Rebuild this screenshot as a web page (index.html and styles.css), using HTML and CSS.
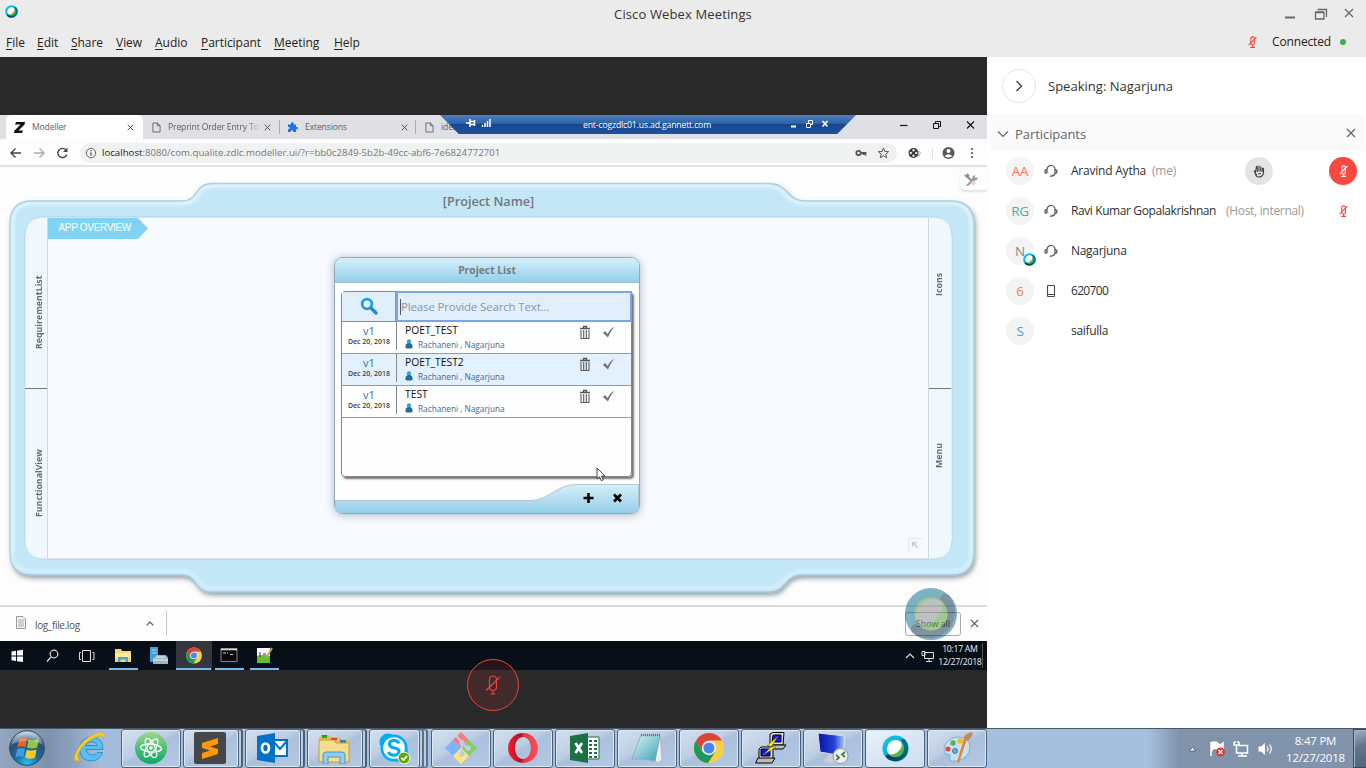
FILE: index.html
```html
<!DOCTYPE html>
<html lang="en">
<head>
<meta charset="utf-8">
<title>Cisco Webex Meetings</title>
<link rel="stylesheet" href="styles.css">
</head>
<body>
<svg class="sprite" aria-hidden="true">
  <defs>
    <linearGradient id="cyan" x1="0" y1="0" x2="1" y2="1"><stop offset="0" stop-color="#12c8ee"/><stop offset="1" stop-color="#0096c4"/></linearGradient>
    <linearGradient id="teal" x1="1" y1="0" x2="0" y2="1"><stop offset="0" stop-color="#017ba0"/><stop offset="1" stop-color="#053c55"/></linearGradient>
    <linearGradient id="green" x1="0" y1="0" x2="1" y2="1"><stop offset="0" stop-color="#a5dc60"/><stop offset="1" stop-color="#3fa548"/></linearGradient>
    <linearGradient id="glass" x1="0" y1="0" x2="0" y2="1"><stop offset="0" stop-color="#d6effa"/><stop offset="1" stop-color="#93cde9"/></linearGradient>
  </defs>
  <symbol id="webex" viewBox="0 0 32 32">
    <circle cx="16" cy="16" r="15.500" fill="url(#cyan)"/>
    <path d="M27.500 5.700A15.500 15.500 0 0 1 5.200 27.100Q3.500 24.500 6 23Q8 22.200 9.500 23.500A10 10 0 0 0 23.500 9.500Q21.800 7 24 5Q26 4 27.500 5.700Z" fill="url(#teal)"/>
    <circle cx="16" cy="16" r="10.300" fill="url(#green)"/>
    <path d="M8.700 23.200A10.300 10.300 0 0 1 22.800 8.300Q24.500 14 20 18.800Q15.500 23.500 8.700 23.200Z" fill="#fff"/>
  </symbol>
  <symbol id="mic-off" viewBox="0 0 16 20">
    <g fill="none" stroke="currentColor" stroke-width="1.200"><rect x="4.500" y="1" width="7" height="14.500" rx="3.500"/><path d="M8 15.500V19M5.500 19h5M1 15.500L15 2"/></g>
  </symbol>
  <symbol id="mic-small" viewBox="0 0 9 12">
    <g fill="none" stroke="currentColor" stroke-width="1.150"><rect x="2.800" y=".8" width="3.600" height="8.200" rx="1.800"/><path d="M4.600 9V11.300M2.200 11.400H7M.6 9.200L8.500 1.200"/></g>
  </symbol>
  <symbol id="headset" viewBox="0 0 14 14">
    <path d="M3 9V5.500A4 4 0 0 1 11 5.500V9Q11 11.500 7.500 12M3 5.500Q1 5.500 1 7.500T3 9.200M11 5.500Q13 5.500 13 7.500T11 9.200M6 12.200H8.300" fill="none" stroke="#4a4a4a" stroke-width="1.200"/>
  </symbol>
  <symbol id="cross" viewBox="0 0 10 10"><path d="M1 1L9 9M9 1L1 9" fill="none" stroke="currentColor" stroke-width="1.300"/></symbol>
  <symbol id="doc" viewBox="0 0 10 12"><path d="M1 1H6L9 4V11H1ZM6 1V4H9" fill="none" stroke="#606368" stroke-width="1"/></symbol>
  <symbol id="trash" viewBox="0 0 10 15"><path d="M0 3.500H10M3.500 3V1.500H6.500V3" fill="none" stroke="#555" stroke-width="1.300"/><path d="M1 5V13.500H9V5M3.700 5V13M6.300 5V13" fill="none" stroke="#5c5c5c" stroke-width="1.100"/></symbol>
  <symbol id="check" viewBox="0 0 12 12"><path d="M0 7L2 5L4.500 8Q7 3 11.500 .5Q7.500 5 5 11.500Z" fill="#737373"/></symbol>
  <symbol id="person" viewBox="0 0 8 10"><circle cx="4" cy="2.400" r="2.200" fill="#3aa6d0"/><path d="M.5 9Q0 4 4 4T7.500 9Q4 10 .5 9Z" fill="#1f6d9a"/></symbol>
  <symbol id="chrome" viewBox="0 0 32 32">
    <circle cx="16" cy="16" r="15" fill="#f9cf48"/>
    <path d="M3 8.500A15 15 0 0 1 29 8.500H16L9.500 20Z" fill="#db4437"/>
    <path d="M3 8.500A15 15 0 0 0 15 31L22.500 19.500L16 23L9.500 20Z" fill="#1b9a59"/>
    <circle cx="16" cy="16" r="7.200" fill="#f3f3f3"/><circle cx="16" cy="16" r="5.600" fill="#4688f1"/>
  </symbol>
</svg>

<header class="top">
  <div class="titlebar">
    <svg class="app-logo"><use href="#webex"/></svg>
    <h1 class="title">Cisco Webex Meetings</h1>
    <svg class="win-ctl" viewBox="0 0 72 14"><path d="M1 10.500H11" stroke="#666" stroke-width="2"/><path d="M32.500 5.500h7.500v6.500h-8.500v-6.500zM31.500 5h8.500M33.500 2.500H42.500V10" fill="none" stroke="#666" stroke-width="1.300"/><path d="M61 2L69 10M69 2L61 10" stroke="#666" stroke-width="1.200"/></svg>
  </div>
  <div class="menubar">
    <nav class="menu">
      <span><u>F</u>ile</span><span><u>E</u>dit</span><span><u>S</u>hare</span><span><u>V</u>iew</span><span><u>A</u>udio</span><span><u>P</u>articipant</span><span><u>M</u>eeting</span><span><u>H</u>elp</span>
    </nav>
    <div class="status"><svg class="mic-s"><use href="#mic-small"/></svg><span class="conn">Connected</span><i class="dot"></i></div>
  </div>
</header>

<main class="main">
  <section class="stage">
    <div class="browser">
      <div class="tabs">
        <div class="tab active"><svg class="zicon" viewBox="0 0 11 11"><path d="M2 0H11L10.500 2.500L4.500 8.500H9L8 11H0L.5 8.500L6.500 2.500H1Z" fill="#111"/></svg><span class="tt">Modeller</span><svg class="x"><use href="#cross"/></svg></div>
        <div class="tab second"><svg class="docic"><use href="#doc"/></svg><span class="tt fade">Preprint Order Entry To</span><svg class="x"><use href="#cross"/></svg></div>
        <div class="tab third"><svg class="puz" viewBox="0 0 10 10"><path d="M0 2.500H3Q2.600 0 4.300 0T5.700 2.500H8V5Q10 4.500 10 6T8 7.300V10H5.500Q5.300 8.300 4 8.300T2.600 10H0V7.200Q1.800 7 1.800 6T0 4.800Z" fill="#1a73e8"/></svg><span class="tt">Extensions</span><svg class="x"><use href="#cross"/></svg></div>
        <div class="tab fourth"><svg class="docic"><use href="#doc"/></svg><span class="tt">idea - cog</span></div>
        <svg class="remote-ctl" viewBox="0 0 80 12"><path d="M0 6.500H7.500" stroke="#111" stroke-width="1.200"/><path d="M33.500 4.500h5v5h-5zM35.500 4V2.500h5v5H39" fill="none" stroke="#111"/><path d="M67 2.500L74 9.500M74 2.500L67 9.500" stroke="#111" stroke-width="1.100"/></svg>
        <div class="rdp">
          <svg class="rdp-l" viewBox="0 0 26 10"><path d="M0 5H4M4 1V9M4 3.500H9M4 6.500H9M8.500 2V8" stroke="#fff" stroke-width="1.500"/><path d="M16.500 9V7M19 9V5M21.500 9V3M24 9V1" stroke="#fff" stroke-width="1.500"/></svg>
          <span class="host">ent-cogzdlc01.us.ad.gannett.com</span>
          <svg class="rdp-r" viewBox="0 0 38 10"><path d="M0 7.500H5" stroke="#fff" stroke-width="2"/><path d="M15.500 4.500h4v4h-4zM17.500 4V1.500h4v4H20" fill="none" stroke="#fff"/><path d="M31.500 2L36.500 7.500M36.500 2L31.500 7.500" stroke="#fff" stroke-width="1.600"/></svg>
        </div>
      </div>
      <div class="toolbar">
        <svg class="navic" viewBox="0 0 60 12"><g fill="none" stroke-width="1.400"><path d="M11 6H1M5.500 1.500L1 6L5.500 10.500" stroke="#444"/><path d="M24 6H34M29.500 1.500L34 6L29.500 10.500" stroke="#aaa"/><path d="M56 3A4.600 4.600 0 1 0 56.800 7.500" stroke="#444"/></g><path d="M57.500 .5V5H53Z" fill="#444"/></svg>
        <div class="omni">
          <svg class="info" viewBox="0 0 12 12"><circle cx="6" cy="6" r="4.700" fill="none" stroke="#666"/><path d="M6 5.200V8.800M6 3V4.200" stroke="#555" stroke-width="1.200"/></svg>
          <span class="url"><b>localhost</b>:8080/com.qualite.zdlc.modeller.ui/?r=bb0c2849-5b2b-49cc-abf6-7e6824772701</span>
          <svg class="keystar" viewBox="0 0 36 12"><circle cx="3.500" cy="6" r="2.200" fill="none" stroke="#555" stroke-width="1.800"/><path d="M5.500 6H10.500V8.500M8.500 6V8" stroke="#555" stroke-width="1.800" fill="none"/><path d="M28.500 1L29.900 4.500L33.700 4.700L30.800 7.100L31.700 10.800L28.500 8.700L25.300 10.800L26.200 7.100L23.300 4.700L27.100 4.500Z" fill="none" stroke="#555"/></svg>
        </div>
        <svg class="extras" viewBox="0 0 72 14"><circle cx="6.500" cy="7" r="5" fill="#383838"/><g fill="#e4e4e4"><circle cx="6.500" cy="4.300" r="1.200"/><circle cx="6.500" cy="9.700" r="1.200"/><circle cx="3.800" cy="7" r="1.200"/><circle cx="9.200" cy="7" r="1.200"/></g><path d="M11 6q3-1.500 2 1.500l-1 2.500" stroke="#aaa" fill="none"/><path d="M25.500 2V12" stroke="#ddd"/><circle cx="41.500" cy="7" r="6" fill="#55585c"/><circle cx="41.500" cy="5" r="2" fill="#fff"/><path d="M37.700 10Q41.500 6.500 45.300 10Q41.500 13 37.700 10Z" fill="#fff"/><g fill="#555"><circle cx="65" cy="3" r="1.100"/><circle cx="65" cy="7" r="1.100"/><circle cx="65" cy="11" r="1.100"/></g></svg>
      </div>
      <div class="page">
        <svg class="frame" viewBox="0 167 987 438">
          <defs>
            <filter id="sh" x="-5%" y="-5%" width="110%" height="112%"><feDropShadow dx="1.500" dy="3" stdDeviation="2" flood-color="#456" flood-opacity=".5"/></filter>
            <filter id="soft"><feGaussianBlur stdDeviation="1.500"/></filter>
            <path id="outer" d="M10 224Q10 201 32 201H181C201 201 192 183.500 213 183.500H768C790 183.500 785 201 806 201H950Q974 201 974 224V552Q974 575 952 575H803C782 575 788 592 768 592H212C192 592 200 575 180 575H32Q10 575 10 552Z"/>
          </defs>
          <use href="#outer" fill="#c4e7f7" stroke="#9fcad3" stroke-width="1.300" filter="url(#sh)"/>
          <path d="M12.500 552V224Q12.500 203.500 32 203.500H182C203 203 195 186 213 186H768C787 186 782 203.500 806 203.500H950Q971 203.500 971 224V552" fill="none" stroke="#effcff" stroke-width="2" filter="url(#soft)"/>
          <path d="M12 552Q12 571 32 571H181C203 572 195 588 213 588H768C787 588 782 571 804 571H950Q971 571 971 552" fill="none" stroke="#e2f4ff" stroke-width="2" filter="url(#soft)"/>
          <rect x="25" y="217" width="927" height="342" rx="20" fill="#f7fafe" stroke="#b4cfdc"/>
          <path d="M47.500 217.500H45Q25.500 217.500 25.500 237V539Q25.500 558.500 45 558.500H47.500ZM929.500 217.500H932Q951.500 217.500 951.500 237V539Q951.500 558.500 932 558.500H929.500Z" fill="#f0f7fd"/>
          <path d="M47.500 218V558M928.500 218V558" stroke="#ccd7df"/><path d="M25 388.500H47M929 388.500H951" stroke="#777"/>
        </svg>
        <div class="tool"><svg viewBox="0 0 14 14"><path d="M3 3.500L9 9" stroke="#777" stroke-width="1.800"/><path d="M0 1.500L2.500 2L3.500 0L5.500 2.500L4.500 5L2 4.500Z" fill="#777"/><path d="M2 12.500L8 6Q8 2.500 11.500 2L10.500 4L12 5L14 4Q13.500 7.500 10 7.700L4 13Z" fill="#888"/><path d="M8 8.500L10.500 11.500" stroke="#ecc4c4" stroke-width="4"/></svg></div>
        <div class="pname">[Project Name]</div>
        <div class="panel">
          <div class="side left"><span>RequirementList</span><span>FunctionalView</span></div>
          <div class="canvas">
            <div class="overview">APP OVERVIEW</div>
            <svg class="expand" viewBox="0 0 14 14"><path d="M.5 14V.5H14" fill="none" stroke="#dfe7ec"/><path d="M4.500 9V4.500H9M4.500 4.500L10 10" fill="none" stroke="#c4cbd1" stroke-width="1.400"/></svg>
            <div class="dialog">
              <div class="dhead">Project List</div>
              <div class="list">
                <div class="search"><div class="glass"><svg viewBox="0 0 18 18"><circle cx="7" cy="7" r="4.800" fill="#e9f6ff" stroke="#1e9fdc" stroke-width="2.800"/><path d="M11 11L16 16" stroke="#1c8fd4" stroke-width="3.500" stroke-linecap="round"/></svg></div><div class="field">Please Provide Search Text...</div></div>
                <div class="row"><div class="ver"><em>v1</em><small>Dec 20, 2018</small></div><div class="proj"><p>POET_TEST</p><div class="who"><svg><use href="#person"/></svg><span>Rachaneni , Nagarjuna</span></div></div><svg class="trash"><use href="#trash"/></svg><svg class="check"><use href="#check"/></svg></div>
                <div class="row alt"><div class="ver"><em>v1</em><small>Dec 20, 2018</small></div><div class="proj"><p>POET_TEST2</p><div class="who"><svg><use href="#person"/></svg><span>Rachaneni , Nagarjuna</span></div></div><svg class="trash"><use href="#trash"/></svg><svg class="check"><use href="#check"/></svg></div>
                <div class="row"><div class="ver"><em>v1</em><small>Dec 20, 2018</small></div><div class="proj"><p>TEST</p><div class="who"><svg><use href="#person"/></svg><span>Rachaneni , Nagarjuna</span></div></div><svg class="trash"><use href="#trash"/></svg><svg class="check"><use href="#check"/></svg></div>
              </div>
              <svg class="dfoot" viewBox="0 0 303 30"><path d="M0 16.500H195C213 16.500 222 .5 240 .5H303V30H0Z" fill="url(#glass)" stroke="#b4c4cc"/><path d="M253 9V19M248 14H258" stroke="#000" stroke-width="2.600"/><path d="M278.500 10.500L285.500 17.500M285.500 10.500L278.500 17.500" stroke="#000" stroke-width="2.800"/></svg>
            </div>
          </div>
          <div class="side right"><span>Icons</span><span>Menu</span></div>
        </div>
        <svg class="cursor" viewBox="0 0 10 15"><path d="M1 1V12L3.500 9.700L5.300 13.700L7.300 12.800L5.500 9H9Z" fill="#fff" stroke="#333" stroke-width=".9"/></svg>
      </div>
      <div class="downloads">
        <svg class="dlic" viewBox="0 0 10 13"><path d="M.5 .5H7L9.500 3V12.500H.5Z" fill="#f4f4f4" stroke="#999"/><path d="M2 4H8M2 6H8M2 8H8M2 10H8" stroke="#aaa"/></svg>
        <span class="dlname">log_file.log</span>
        <svg class="dlcaret" viewBox="0 0 8 5"><path d="M.7 4.300L4 1L7.300 4.300" fill="none" stroke="#555" stroke-width="1.200"/></svg>
        <i class="dlsep"></i>
        <span class="showall">Show all</span>
        <svg class="dlx"><use href="#cross"/></svg>
        <svg class="ball" viewBox="0 0 52 52"><circle cx="26" cy="26" r="21" fill="none" stroke="#0c6c8c" stroke-width="10"/><path d="M40 11A21 21 0 0 1 11 41" fill="none" stroke="#0d3349" stroke-width="10" stroke-linecap="round"/><circle cx="26" cy="26" r="16.500" fill="#4d9a35"/><path d="M15 38A16.500 16.500 0 0 1 37 14Q39 23 32 30Q25 37.500 15 38Z" fill="#888"/></svg>
      </div>
    </div>
    <div class="rbar">
      <span class="rb"><svg viewBox="0 0 32 24"><path d="M10.500 7.500L15 6.800V11.500H10.500ZM16 6.700L22 5.800V11.500H16ZM10.500 12.500H15V17L10.500 16.300ZM16 12.500H22V18L16 17.200Z" fill="#fff"/></svg></span>
      <span class="rb"><svg viewBox="0 0 32 24"><circle cx="18" cy="10" r="3.800" fill="none" stroke="#ddd" stroke-width="1.200"/><path d="M15 13L11 17.500" stroke="#ddd" stroke-width="1.300"/></svg></span>
      <span class="rb"><svg viewBox="0 0 32 24"><path d="M10.500 6.500H18.500V17.500H10.500ZM9 8.500H7.500V15.500H9M20.500 8.500H22V15.500H20.500" fill="none" stroke="#ddd"/></svg></span>
      <span class="rb on"><svg viewBox="0 0 32 24"><path d="M8 5H14L15 7H24V18H8Z" fill="#f8d66b"/><path d="M8 9H24V14H8Z" fill="#fce89f"/><path d="M11 18V13H21V18H18.500V15.500H13.500V18Z" fill="#42a5dc"/></svg></span>
      <span class="rb"><svg viewBox="0 0 32 24"><path d="M8 3H16V18H8Z" fill="#3fa0d8"/><path d="M9.500 6H14.500M9.500 9H14.500" stroke="#a8dcf8"/><path d="M13 13Q13 11 15 11H23Q25 11 26 14V20H11V14Z" fill="#9db3c1"/><path d="M14 13H23M11 16H26" fill="none" stroke="#f0f5f8"/></svg></span>
      <span class="rb on act"><svg viewBox="0 0 32 24"><use href="#chrome" x="8.500" y="3" width="17" height="17"/></svg></span>
      <span class="rb on"><svg viewBox="0 0 32 24"><path d="M8 4.500H24V17.500H8Z" fill="#0a0a0a" stroke="#888"/><path d="M8 5.500H24" stroke="#ddd" stroke-width="1.500"/><path d="M10 9H13M14 9H15M17 10.500H20" stroke="#ccc"/></svg></span>
      <span class="rb on"><svg viewBox="0 0 32 24"><path d="M9 4H22V19H9Z" fill="#fafafa"/><path d="M9 12Q15 10 22 12V19H9Z" fill="#65bd36"/><path d="M12 8V13M15 10H18" stroke="#333"/><path d="M18 14L24 4" stroke="#c9a33d" stroke-width="2"/></svg></span>
      <svg class="rtray" viewBox="0 0 32 14"><path d="M2 9L6 5L10 9" fill="none" stroke="#ddd" stroke-width="1.200"/><path d="M20.500 3.500H29.500V9.500H20.500ZM25 9.500V12M22 12.500H28M18 2.500h3v4h-3z" fill="#111820" stroke="#ddd"/></svg>
      <div class="rclock">10:17 AM<br>12/27/2018</div>
    </div>
    <div class="mute"><svg><use href="#mic-off"/></svg></div>
  </section>

  <aside class="people">
    <div class="speaking"><span class="ring"><svg viewBox="0 0 8 12"><path d="M1.500 1L6.500 6L1.500 11" fill="none" stroke="#444" stroke-width="1.400"/></svg></span><span class="spk">Speaking: Nagarjuna</span></div>
    <div class="phead"><svg class="chev" viewBox="0 0 12 8"><path d="M1 1.500L6 6.500L11 1.500" fill="none" stroke="#666" stroke-width="1.200"/></svg><span class="ptitle">Participants</span><svg class="px"><use href="#cross"/></svg></div>
    <div class="person"><span class="av red">AA</span><svg class="dev"><use href="#headset"/></svg><span class="nm n1">Aravind Aytha</span><span class="role r1">(me)</span><span class="hand"><svg viewBox="0 0 12 14"><path d="M2.500 6V9.500Q2.500 13 6 13T10.500 9V4.500Q9.500 3.500 9.200 5V8M4.300 8V3Q4.300 2 3.500 2.500L2.700 7M6 7.500V1.500M7.700 7.500V2.500M1 6.500Q2 10 4 11M5 10L8 9.500" fill="none" stroke="#444" stroke-width="1.100"/></svg></span><span class="muted on"><svg><use href="#mic-small"/></svg></span></div>
    <div class="person"><span class="av grn">RG</span><svg class="dev"><use href="#headset"/></svg><span class="nm n2">Ravi Kumar Gopalakrishnan</span><span class="role r2">(Host, internal)</span><span class="muted"><svg><use href="#mic-small"/></svg></span></div>
    <div class="person"><span class="av gry">N<svg class="badge"><use href="#webex"/></svg></span><svg class="dev"><use href="#headset"/></svg><span class="nm n3">Nagarjuna</span></div>
    <div class="person"><span class="av org">6</span><svg class="dev" viewBox="0 0 14 14"><path d="M4 1.500H10Q10.500 1.500 10.500 2V12Q10.500 12.500 10 12.500H4Q3.500 12.500 3.500 12V2Q3.500 1.500 4 1.500ZM3.500 10.500H10.500" fill="none" stroke="#4a4a4a" stroke-width="1.100"/></svg><span class="nm n4">620700</span></div>
    <div class="person"><span class="av blu">S</span><svg class="dev"></svg><span class="nm n5">saifulla</span></div>
  </aside>
</main>

<footer class="taskbar">
  <div class="start">
    <svg class="orb" viewBox="0 0 36 36"><defs><radialGradient id="orbg" cx=".5" cy=".95" r=".9"><stop offset="0" stop-color="#20c5ee"/><stop offset=".4" stop-color="#1b6a9f"/><stop offset=".75" stop-color="#2a527c"/><stop offset="1" stop-color="#b5c9d8"/></radialGradient></defs><circle cx="18" cy="18" r="17.300" fill="url(#orbg)" stroke="#2c4560"/><path d="M10 9.500Q14 6.500 18 8.500L16.500 17Q12 15.500 8.500 17.500Z" fill="#ee6324"/><path d="M19.500 9.500Q24 11.500 30 9L28 17.500Q23 19.500 18 17.500Z" fill="#92c83e"/><path d="M8 19.500Q12 17.500 16 19L14.500 27Q10 25.500 6.500 27.500Z" fill="#3f9ce0"/><path d="M17.800 19.700Q23 21.500 27.500 19.500L26 27.500Q21 30 16 27.500Z" fill="#fdc72e"/><path d="M3 14Q9 2 18 2T33 14Q18 8 3 14Z" fill="#fff" opacity=".25"/></svg>
    <svg class="ie" viewBox="0 0 32 32"><path d="M29 18.500H12Q13 24 18.500 24Q21.500 24 23.500 21.500H28.500Q25 30 17.500 30Q6 29.500 5.500 18Q6 6.500 17.500 6Q29.500 6.500 29 18.500ZM12 14.500H23Q22.500 11 17.500 11T12 14.500Z" fill="#56c0f2" stroke="#2384c4" stroke-width=".8"/><path d="M7 29Q-3 33 2 21Q8 8 22 2.500Q33-1 29.500 8.500Q30 3 23.500 5.500Q11 10 5 21Q2 29 7 29Z" fill="#fbcb2c" stroke="#d99d15" stroke-width=".5"/></svg>
  </div>
  <div class="apps">
    <span class="app"><svg viewBox="0 0 32 32"><defs><linearGradient id="at" x1="0" y1="0" x2="0" y2="1"><stop offset="0" stop-color="#9fd68a"/><stop offset="1" stop-color="#08a768"/></linearGradient></defs><circle cx="16" cy="16" r="16" fill="url(#at)"/><g fill="none" stroke="#fff" stroke-width="1.300"><ellipse cx="16" cy="16" rx="4" ry="10.500" transform="rotate(-25 16 16)"/><ellipse cx="16" cy="16" rx="4" ry="10.500" transform="rotate(35 16 16)"/><ellipse cx="16" cy="16" rx="4" ry="10.500" transform="rotate(95 16 16)"/></g><circle cx="16" cy="16" r="1.800" fill="#fff"/></svg></span>
    <span class="app stack"><svg viewBox="0 0 32 32"><rect width="32" height="32" rx="2" fill="#474747"/><path d="M8 11L24 6V12L16 14.500L24 17V22L8 27V21L16 18.500L8 16Z" fill="#ff9800"/></svg></span>
    <span class="app stack"><svg viewBox="0 0 32 32"><path d="M17 8H31V24H17Z" fill="#fff" stroke="#0072c6" stroke-width="2"/><path d="M17 9L24 17L31 9" fill="none" stroke="#0072c6" stroke-width="2"/><path d="M1 4L19 1V31L1 28Z" fill="#0072c6"/><ellipse cx="9.500" cy="16" rx="3.500" ry="4.500" fill="none" stroke="#fff" stroke-width="2.700"/></svg></span>
    <span class="app stack"><svg viewBox="0 0 32 32"><path d="M1 5L3 3H11L13 5H22L24 8H31V30H1Z" fill="#e3bd58"/><path d="M4 3H9V6H4Z" fill="#18a431"/><path d="M13 6H19V8H13Z" fill="#d44324"/><path d="M22 8H28V11H22Z" fill="#2880d0"/><path d="M1 8H16L18 11H31V30H1Z" fill="#f4dd8c" stroke="#c99c36"/><path d="M5 32V23Q5 20 8 20H24Q27 20 27 23V32H22V25H10V32Z" fill="#8fcdea" stroke="#4699c7"/></svg></span>
    <span class="app stack3"><svg viewBox="0 0 32 32"><circle cx="9" cy="10" r="8.500" fill="#00aff0"/><circle cx="21" cy="22" r="8.500" fill="#00aff0"/><circle cx="15" cy="16" r="13.500" fill="#00aff0"/><circle cx="15" cy="16" r="10.800" fill="#fff"/><path d="M20 11.500Q19 8.500 15 8.500Q10.500 8.500 10.500 12Q10.500 15 15 15.800Q20 16.500 20 19.500Q20 23.200 15 23.200Q10.500 23 9.800 19.800" fill="none" stroke="#00aff0" stroke-width="3.200"/><circle cx="25" cy="26" r="6" fill="#68a70b" stroke="#fff"/><path d="M22.500 26L24.500 28L28 24" fill="none" stroke="#fff" stroke-width="1.700"/></svg></span>
    <span class="app"><svg viewBox="0 0 32 32"><path d="M16 0L24 8L16 16L8 8Z" fill="#f27e7e"/><path d="M8 8L16 16L8 24L0 16Z" fill="#80b3ff"/><path d="M24 8L32 16L24 24L16 16Z" fill="#87cd62"/><path d="M16 16L24 24L16 32L8 24Z" fill="#ffe680"/><path d="M11 4L17 10V23M17 11L23 17" fill="none" stroke="#bed0e4" stroke-width="2.200"/><g fill="#bed0e4"><circle cx="17" cy="11" r="2.700"/><circle cx="17" cy="22" r="2.700"/><circle cx="23" cy="16" r="2.700"/></g></svg></span>
    <span class="app"><svg viewBox="0 0 32 32"><defs><linearGradient id="op" x1="0" x2="1"><stop offset="0" stop-color="#f31d2b"/><stop offset=".45" stop-color="#b70d1e"/><stop offset=".5" stop-color="#e7313b"/><stop offset="1" stop-color="#ff5157"/></linearGradient></defs><path fill-rule="evenodd" d="M16 1A15 15 0 1 1 16 31A15 15 0 1 1 16 1ZM16 5C5.500 5 5.500 27 16 27S26.500 5 16 5Z" fill="url(#op)"/></svg></span>
    <span class="app"><svg viewBox="0 0 32 32"><path d="M17 5H30V27H17Z" fill="#fff" stroke="#1d7044"/><path d="M20 9H23M25 9H28M20 13H23M25 13H28M20 17H23M25 17H28M20 21H23M25 21H28M20 25H23M25 25H28" stroke="#1d7044" stroke-width="2"/><path d="M1 4L19 1V31L1 28Z" fill="#1d7044"/><path d="M6.500 11L13 21M13 11L6.500 21" stroke="#fff" stroke-width="2.700"/></svg></span>
    <span class="app"><svg viewBox="0 0 32 32"><defs><linearGradient id="np" x1="0" y1="0" x2="1" y2="1"><stop stop-color="#dff8f9"/><stop offset="1" stop-color="#3c9eb4"/></linearGradient></defs><path d="M29 4L31 28L26 31L24 28Z" fill="#eee" stroke="#aaa" stroke-width=".6"/><path d="M10 3H29L24 29Q13 26 1 27Z" fill="url(#np)" stroke="#7ba3ad" stroke-width=".7"/><path d="M10 3H29" stroke="#777" stroke-width="2.500" stroke-dasharray="1 1"/></svg></span>
    <span class="app"><svg><use href="#chrome"/></svg></span>
    <span class="app"><svg viewBox="0 0 32 32"><g stroke="#000" stroke-width="1"><path d="M15 2L18 .5H29L28 13H15Z" fill="#ddd"/><path d="M14 13H31L28 17H12Z" fill="#bbb"/><path d="M18 3H26V10H17Z" fill="#1117df"/><path d="M4 17L6 15H18V27H4Z" fill="#ddd"/><path d="M3 26H20L17 31H.5Z" fill="#bbb"/><path d="M6 17H15V24H6Z" fill="#1117df"/></g><path d="M23 4L12 14H17L8 23L21 15H16Z" fill="#ff0" stroke="#777000" stroke-width=".6"/></svg></span>
    <span class="app"><svg viewBox="0 0 32 32"><defs><linearGradient id="rd"><stop stop-color="#0613a2"/><stop offset=".6" stop-color="#2443d8"/><stop offset="1" stop-color="#b2d0f6"/></linearGradient></defs><path d="M1 1L28 4L26 24L3 20Z" fill="url(#rd)" stroke="#ddd"/><path d="M11 22L17 23L16 27L22 29Q12 33 6 28L11 26Z" fill="#ccd"/><circle cx="23.500" cy="24" r="7.500" fill="#eee" stroke="#999"/><path d="M19 23L22 25.500L19.500 28M28 20L25 22.500L28 25" fill="none" stroke="#2d8b3d" stroke-width="1.800"/></svg></span>
    <span class="app cur"><svg viewBox="0 0 32 32"><use href="#webex" x="3" y="3" width="27" height="27"/></svg></span>
    <span class="app"><svg viewBox="0 0 32 32"><path d="M3 17Q4 7 16 5Q29 5 29 15Q28 27 15 29Q7 30 9 25Q10 22 5 22Q3 21 3 17Z" fill="#c7e2f5" stroke="#7baed0"/><circle cx="7" cy="17" r="2.500" fill="#e8432e"/><circle cx="12" cy="11" r="2.700" fill="#51b646"/><circle cx="19" cy="9" r="2.700" fill="#f6bb27"/><circle cx="14" cy="19" r="2.500" fill="#76acd6" stroke="#3979af"/><path d="M26 7L18 31L16 30L23 6Z" fill="#e28a35"/><path d="M23 7Q22 2 31 0Q33 4 27 9Z" fill="#bd8c63"/></svg></span>
  </div>
  <div class="tray">
    <svg viewBox="0 0 86 20"><path d="M1 12L4.500 8.500L8 12Z" fill="#fff" stroke="#667"/><path d="M23 3V17M24 3.500Q28 2 30 4.500T35 4V10Q32 12 29 10T24 11Z" fill="#fff" stroke="#fff" stroke-width="1.500"/><circle cx="32.500" cy="13" r="4.500" fill="#d93830"/><path d="M30.500 11L34.500 15M34.500 11L30.500 15" stroke="#fff" stroke-width="1.300"/><path d="M50.500 6.500H59.500V14H48.500V9M54 14V16.500M50 17H59M46 3V6H51V3M48.500 6V9M47 2V4M50 2V4" fill="none" stroke="#fff" stroke-width="1.500"/><path d="M70.500 7.500H73L77 4V16L73 12.500H70.500Z" fill="#fff"/><path d="M79 7.500Q81 10 79 12.500M81.500 5.500Q85 10 81.500 14.500" fill="none" stroke="#fff" stroke-width="1.200"/></svg>
    <div class="clock">8:47 PM<br>12/27/2018</div>
    <i class="peek"></i>
  </div>
</footer>
</body>
</html>
```
FILE: styles.css
```css
* { box-sizing: border-box; }
body { margin: 0; width: 1366px; height: 768px; overflow: hidden; display: flex; flex-direction: column; font-family: "Open Sans", "Noto Sans", sans-serif; color: #333; background: #fff; }
svg { display: block; flex: none; }
span { white-space: nowrap; flex: none; }
p, h1 { margin: 0; }
.sprite { position: absolute; width: 0; height: 0; }

.top { height: 57px; background: #ebebeb; flex: none; }
.titlebar { height: 28px; display: flex; align-items: center; padding-left: 5px; }
.app-logo { width: 13px; height: 13px; margin-bottom: 5px; }
.title { width: 1266px; flex: none; padding-left: 64px; text-align: center; font-size: 13px; font-weight: 400; letter-spacing: .13px; color: #333; }
.win-ctl { width: 72px; height: 14px; margin-bottom: 1px; }
.menubar { height: 29px; display: flex; padding-left: 6px; font-size: 12px; color: #222; }
.menu { display: grid; grid-template-columns: 31px 34px 45px 39px 46px 73px 60px 30px; line-height: 30px; letter-spacing: -.04px; }
.menu u { text-underline-offset: 2px; }
.status { display: flex; margin-left: 884px; height: 26px; align-items: center; }
.mic-s { width: 9px; height: 12px; color: #f5483f; margin-top: 1px; }
.conn { margin-left: 15px; width: 68px; letter-spacing: -.15px; }
.dot { width: 6px; height: 6px; border-radius: 50%; background: #3fae49; margin-top: 1px; }

.main { height: 671px; display: flex; flex: none; }
.stage { width: 987px; background: #292929; padding-top: 58px; position: relative; }
.browser { height: 526px; background: #fdfdfd; }
.tabs { height: 24px; background: #dee0e5; display: flex; position: relative; padding-left: 6px; }
.tab { display: flex; align-items: center; font-size: 8.600px; color: #5b5e63; height: 24px; }
.tt { letter-spacing: -.15px; }
.active { width: 137px; background: #fff; border-radius: 5px 5px 0 0; padding-left: 8px; }
.active .tt { margin-left: 7px; width: 95px; }
.zicon { width: 11px; height: 11px; }
.x { width: 7px; height: 7px; color: #444; }
.docic { width: 9px; height: 11px; }
.second { width: 136px; padding-left: 9px; }
.second .tt { margin-left: 7px; width: 96px; overflow: hidden; }
.fade { mask-image: linear-gradient(90deg, #000 80%, transparent 98%); }
.third { width: 136px; border-left: 1px solid #aaadb3; padding-left: 8px; height: 14px; margin-top: 5px; }
.third .tt { margin-left: 7px; width: 96px; }
.puz { width: 10px; height: 10px; }
.fourth { border-left: 1px solid #aaadb3; padding-left: 9px; height: 14px; margin-top: 5px; width: 485px; }
.fourth .tt { margin-left: 7px; }
.remote-ctl { width: 80px; height: 12px; margin-top: 4px; }
.rdp { position: absolute; left: 440px; top: 0; width: 416px; height: 19px; clip-path: polygon(0 0, 100% 0, 95.500% 100%, 4.500% 100%); background: linear-gradient(#4d80bc 0, #2c62a8 45%, #17458f 50%, #1e539d 100%); display: flex; align-items: center; padding-left: 27px; color: #fff; }
.rdp-l { width: 26px; height: 10px; margin: 0 0 3px -1px; }
.host { font-size: 8.700px; width: 210px; margin-left: 91px; letter-spacing: -.17px; }
.rdp-r { width: 38px; height: 10px; margin: 0 0 2px -2px; }
.toolbar { height: 28px; display: flex; align-items: center; padding: 1px 0 0 10px; border-bottom: 2px solid #dfe1e4; }
.navic { width: 60px; height: 12px; }
.omni { margin-left: 10px; width: 817px; height: 20px; border-radius: 10px; background: #f0f2f2; display: flex; align-items: center; padding-left: 5px; }
.info { width: 12px; height: 12px; }
.url { font-size: 9.660px; color: #777; width: 758px; margin-left: 5px; }
.url b { color: #222; font-weight: 400; }
.keystar { width: 36px; height: 12px; margin-left: -5px; }
.extras { width: 72px; height: 14px; margin-left: 10px; }

.page { height: 438px; position: relative; display: flex; flex-direction: column; }
.frame { position: absolute; left: 0; top: 0; width: 987px; height: 438px; }
.tool { position: absolute; right: 0; top: 1px; width: 27px; height: 22px; background: #fdfdfd; border-radius: 5px 0 0 5px; box-shadow: 0 2px 2px #ddd; padding: 5px 0 0 4px; opacity: .85; }
.tool svg { width: 14px; height: 14px; }
.pname { position: relative; width: 977px; height: 50px; padding-top: 25px; text-align: center; font-size: 12.700px; line-height: 18px; font-weight: 600; color: #70767a; }
.panel { position: relative; height: 342px; margin-left: 25px; width: 927px; display: grid; grid-template-columns: 22px 1fr 23px; }
.side { display: grid; grid-template-rows: 171px 171px; font-size: 8.800px; font-weight: 700; color: #666d72; }
.side span { writing-mode: vertical-rl; transform: rotate(180deg); display: flex; justify-content: center; align-items: center; }
.left span { padding-bottom: 20px; width: 17px; }
.left { padding-left: 5px; }
.right span { padding-top: 36px; width: 20px; }
.canvas { position: relative; }
.overview { width: 100px; height: 21px; margin: 1px 0 0 1px; padding-left: 10px; background: #80d4f1; clip-path: polygon(0 0, 90% 0, 100% 50%, 90% 100%, 0 100%); color: #fff; font: 10px/20px "Liberation Sans", sans-serif; letter-spacing: -.32px; padding-left: 10.500px; }
.expand { position: absolute; right: 7px; bottom: 7px; width: 14px; height: 14px; }
.dialog { width: 306px; height: 257px; margin: 18px 0 0 287px; border: 1px solid #93abb8; border-radius: 9px; overflow: hidden; background: #fefefe; box-shadow: 0 1px 8px #a9b5bd; display: flex; flex-direction: column; }
.dhead { height: 25px; background: linear-gradient(#d6effa, #93cfec); border-bottom: 1px solid #a7c3d1; text-align: center; font-size: 10.300px; line-height: 24px; font-weight: 700; color: #767c80; }
.list { margin: 8px 5px 7px 6px; height: 186px; width: 291px; border: 1px solid #858585; border-radius: 4px; box-shadow: 2px 2px 2px #777; flex: none; }
.search { display: flex; height: 30px; background: #e1effd; border-bottom: 1px solid #8b8b8b; }
.glass { width: 54px; padding: 5px 0 0 18px; border-right: 1px solid #999; }
.glass svg { width: 18px; height: 18px; }
.field { border: 2px solid #79a5e8; width: 236px; margin: -1px -1px -1px 0; padding-left: 2px; line-height: 28px; font-size: 11.500px; color: #8a969f; letter-spacing: -.15px; }
.field::before { content: ""; float: left; height: 16px; margin-top: 6px; border-left: 1px solid #555; }
.row { height: 32px; border-bottom: 1.500px solid #999; display: flex; }
.alt { background: #e3f0fd; }
.ver { width: 55px; height: 28px; border-right: 1px solid #888; text-align: center; display: flex; flex-direction: column; padding-top: 2px; }
.ver em { font: 11px/13px "Open Sans"; color: #386c9b; }
.ver small { font-size: 7px; line-height: 9px; font-weight: 600; color: #444; white-space: nowrap; }
.proj { width: 174px; padding-left: 8px; }
.proj p { font-size: 10.300px; line-height: 15px; padding-top: 1px; color: #111; letter-spacing: 0; }
.who { display: flex; align-items: center; font-size: 8.300px; line-height: 12px; padding-top: 1px; color: #386d98; gap: 5px; letter-spacing: -.02px; }
.who svg { width: 8px; height: 10px; margin-top: -3px; }
.trash { width: 10px; height: 15px; margin: 3px 13px 0 9px; }
.check { width: 12px; height: 12px; margin-top: 4px; }
.dfoot { width: 304px; height: 30px; flex: none; }
.cursor { position: absolute; left: 596px; top: 300px; width: 10px; height: 15px; }
.downloads { height: 36px; border-top: 2px solid #d8dadd; display: flex; align-items: center; position: relative; padding: 0 0 1px 16px; color: #555; }
.dlic { width: 10px; height: 13px; margin-bottom: 2px; }
.dlname { font-size: 10px; margin-left: 9px; width: 111px; letter-spacing: -.35px; padding-top: 3px; }
.dlcaret { width: 8px; height: 5px; }
.dlsep { width: 1px; height: 25px; background: #c8c8c8; margin-left: 12px; }
.showall { width: 56px; height: 24px; margin-left: 738px; border: 1px solid #aaa; border-radius: 3px; font-size: 8.800px; line-height: 22px; text-align: center; }
.dlx { width: 9px; height: 9px; margin-left: 9px; color: #555; }
.ball { position: absolute; left: 905px; top: -19px; width: 52px; height: 52px; opacity: .52; }

.rbar { height: 29px; background: linear-gradient(#080d15, #07111b); display: flex; align-items: center; }
.rb { width: 35.300px; height: 29px; padding-top: 3px; }
.rb svg { width: 32px; height: 24px; margin-left: 1px; }
.on { background: linear-gradient(#76b9ed, #76b9ed) 3px 27px / 29px 2px no-repeat; }
.act { background: linear-gradient(#76b9ed, #76b9ed) 0 27px / 35px 2px no-repeat, #34383e; }
.rtray { width: 32px; height: 14px; margin-left: 622px; }
.rclock { width: 46px; margin-left: 1px; color: #eee; text-align: center; font-size: 8.700px; line-height: 12.500px; letter-spacing: -.28px; border-right: 1px solid #555; }
.mute { position: absolute; left: 467px; top: 602px; width: 52px; height: 52px; border: 1px solid #e9443c; border-radius: 50%; background: rgba(145, 45, 45, .22); color: #e9443c; padding: 15px 17px; }
.mute svg { width: 16px; height: 20px; }

.people { width: 379px; background: #fff; }
.speaking { height: 58px; display: flex; align-items: center; padding-left: 15px; font-size: 13px; }
.ring { width: 34px; height: 34px; border: 1px solid #e4e4e4; border-radius: 50%; padding: 10px 12px; }
.ring svg { width: 8px; height: 12px; }
.spk { margin-left: 12px; letter-spacing: .02px; }
.phead { height: 36px; margin: 0 1px 0 3px; background: #fafafa; display: flex; align-items: center; padding: 2px 0 0 7px; font-size: 13px; color: #666; }
.chev { width: 12px; height: 8px; }
.ptitle { margin-left: 6px; width: 331px; letter-spacing: -.06px; }
.px { width: 10px; height: 10px; margin-bottom: 2px; }
.person { height: 40px; display: flex; align-items: center; padding-left: 19px; font-size: 12px; color: #2f2f2f; }
.av { width: 28px; height: 28px; border-radius: 50%; background: #f4f4f4; text-align: center; font-size: 13.500px; line-height: 29px; position: relative; letter-spacing: -.3px; }
.red { color: #ff6f66; } .grn { color: #43b39c; } .gry { color: #888; } .org { color: #f08050; } .blu { color: #3ba5de; }
.badge { position: absolute; left: 17px; top: 16px; width: 13px; height: 13px; }
.dev { width: 14px; height: 14px; margin: 0 13px 0 10px; }
.nm { letter-spacing: -.22px; padding-bottom: 1px; }
.role { color: #999; padding-bottom: 1px; }
.n1 { width: 81px; } .r1 { width: 93px; letter-spacing: -.25px; }
.n2 { width: 155px; letter-spacing: -.4px; } .r2 { width: 103px; letter-spacing: -.31px; }
.n3 { letter-spacing: -.3px; } .n4 { letter-spacing: -.68px; } .n5 { letter-spacing: -.3px; }
.hand { width: 28px; height: 28px; border-radius: 50%; background: #e4e4e4; padding: 7px 8px; }
.hand svg { width: 12px; height: 14px; }
.muted { width: 28px; height: 28px; border-radius: 50%; color: #f5483f; padding: 8px 10px; }
.muted svg { width: 9px; height: 12px; }
.muted.on { background: #fa4840; color: #fff; margin-left: 56px; }

.taskbar { height: 40px; border-top: 1px solid #485766; display: flex; background: #a5c0de; box-shadow: inset 0 1px #bdcddf; flex: none; }
.start { width: 121px; background: linear-gradient(90deg, #94a7c0 0, #7e91ab 40%, #8ba1bf 60%, #a4bcdb 82%); display: flex; padding-left: 9px; }
.orb { width: 36px; height: 36px; margin-top: 1px; }
.ie { width: 32px; height: 32px; margin: 2px 0 0 29px; }
.apps { display: grid; grid-template-columns: repeat(14, 62px); width: 868px; }
.app { width: 60px; height: 39px; border: 1px solid #4d6078; border-radius: 3px; box-shadow: inset 0 0 0 1px #dbe8f5; background: linear-gradient(150deg, #d4dfed 0, #bdcee3 43%, #aac0dd 52%, #b4c9e3 100%); padding: 2px 0 0 13px; }
.app svg { width: 32px; height: 32px; }
.stack { width: 56px; padding-left: 10px; box-shadow: inset 0 0 0 1px #dbe8f5, 3px 0 0 -1px #b9cde3, 4px 0 0 0 #4d6078; }
.stack3 { width: 51px; padding-left: 9px; box-shadow: inset 0 0 0 1px #dbe8f5, 3px 0 0 -1px #b9cde3, 4px 0 0 0 #5d7088, 7px 0 0 -1px #b9cde3, 8px 0 0 0 #5d7088; }
.cur { background: linear-gradient(150deg, #edf3fa, #d9e5f3 50%, #cedeef); }
.tray { width: 377px; display: flex; align-items: center; background: linear-gradient(90deg, #a5c0de 160px, #8193ab 190px); padding-left: 199px; }
.tray svg { width: 86px; height: 20px; flex: none; }
.clock { width: 75px; flex: none; margin-left: 4px; text-align: center; color: #fff; font-size: 11.500px; line-height: 17px; letter-spacing: -.22px; white-space: nowrap; }
.peek { width: 14px; height: 39px; margin-left: 0; flex: none; border: 1px solid #3d4b5a; border-right: 0; background: linear-gradient(160deg, #a3b2c1, #62758a 45%, #51657b); box-shadow: inset 1px 1px #a2b2c3; }
```
